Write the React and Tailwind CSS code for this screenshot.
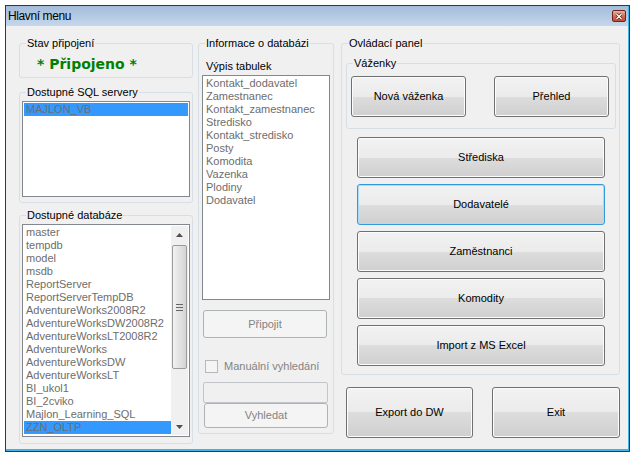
const dbs = [
  "master",
  "tempdb",
  "model",
  "msdb",
  "ReportServer",
  "ReportServerTempDB",
  "AdventureWorks2008R2",
  "AdventureWorksDW2008R2",
  "AdventureWorksLT2008R2",
  "AdventureWorks",
  "AdventureWorksDW",
  "AdventureWorksLT",
  "BI_ukol1",
  "BI_2cviko",
  "Majlon_Learning_SQL",
  "ZZN_OLTP",
];

const tables = [
  "Kontakt_dodavatel",
  "Zamestnanec",
  "Kontakt_zamestnanec",
  "Stredisko",
  "Kontakt_stredisko",
  "Posty",
  "Komodita",
  "Vazenka",
  "Plodiny",
  "Dodavatel",
];

const GroupBox = ({ title, className, children }) => (
  <fieldset className={`rounded-[3px] border border-[#d5dfe5] ${className}`}>
    <legend className="ml-[6px] px-[1px] text-[11px] leading-[13px] text-black">{title}</legend>
    {children}
  </fieldset>
);

const WinButton = ({ children, className, focused }) => (
  <button
    className={`flex items-center justify-center rounded-[3px] border bg-[linear-gradient(to_bottom,#f2f2f2_0%,#ebebeb_50%,#dddddd_50%,#cfcfcf_100%)] text-[11px] text-black ${
      focused
        ? "border-[#3399dd] shadow-[inset_0_0_0_1px_#a8def7]"
        : "border-[#707070] shadow-[inset_0_0_0_1px_#fcfcfc]"
    } ${className}`}
  >
    {children}
  </button>
);

const DisabledButton = ({ children, className }) => (
  <button className={`flex items-center justify-center rounded-[3px] border border-[#adb2b5] bg-[#f4f4f4] text-[11px] text-[#838383] ${className}`}>
    {children}
  </button>
);

const Row = ({ text, selected }) => (
  <div className={`h-[13px] truncate pl-[2px] leading-[13px] text-[#6d6d6d] ${selected ? "bg-[#3399ff]" : ""}`}>
    {text}
  </div>
);

const Arrow = ({ down }) => (
  <svg width="7" height="4" viewBox="0 0 7 4">
    <path d={down ? "M0 0 H7 L3.5 4 Z" : "M0 4 H7 L3.5 0 Z"} fill="#505050" />
  </svg>
);

const ScrollBar = () => (
  <div className="flex w-[17px] flex-col bg-[#f0f0f0]">
    <div className="flex h-[17px] items-center justify-center">
      <Arrow />
    </div>
    <div className="flex-1 px-[1px] pt-[2px]">
      <div className="flex h-[124px] flex-col items-center justify-center gap-[2px] rounded-[2px] border border-[#9b9b9b] bg-[linear-gradient(to_right,#f2f2f2,#e2e2e2_50%,#d4d4d4)]">
        <div className="h-px w-[7px] bg-[#666]" />
        <div className="h-px w-[7px] bg-[#666]" />
        <div className="h-px w-[7px] bg-[#666]" />
      </div>
    </div>
    <div className="flex h-[17px] items-center justify-center">
      <Arrow down />
    </div>
  </div>
);

const CloseButton = () => (
  <div className="flex h-[12px] w-[14px] items-center justify-center rounded-[2px] border border-[#6e2418] bg-[linear-gradient(to_bottom,#eab2a4,#d06a52_55%,#c0503a)]">
    <svg width="8" height="7" viewBox="0 0 8 7">
      <path d="M1.5 1 L6.5 6 M6.5 1 L1.5 6" stroke="#5a1a12" strokeWidth="2.6" />
      <path d="M1.5 1 L6.5 6 M6.5 1 L1.5 6" stroke="#ffffff" strokeWidth="1.4" />
    </svg>
  </div>
);

export default function App() {
  return (
    <div className="h-[468px] w-[644px] bg-white pl-[5px] pt-[5px] font-['Liberation_Sans',Arial,sans-serif] text-[11px] leading-[13px] text-black">
      <div className="h-[447px] w-[625px] border border-[#2b3a48]">
        <div className="flex h-full flex-col border-r border-b-2 border-[#41b4e6]">
          {/* title bar */}
          <div className="flex h-[20px] items-center justify-between bg-[linear-gradient(to_bottom,#a3bcd9,#c5d7ec)] pl-[2px] pr-[2px]">
            <span className="text-[12px] leading-[20px] tracking-[-0.4px] text-black">Hlavní menu</span>
            <CloseButton />
          </div>

          {/* client area */}
          <div className="flex flex-1 bg-[#f0f0f0] pl-[13px] pt-[11px]">
            {/* left column */}
            <div className="flex w-[174px] flex-col">
              <GroupBox title="Stav připojení" className="h-[41px]">
                <div className="mt-[6px] pl-[17px] font-['DejaVu_Sans',sans-serif] text-[14px] font-bold leading-[16px] text-[#008000]">
                  * Připojeno *
                </div>
              </GroupBox>
              <GroupBox title="Dostupné SQL servery" className="mt-[8px] h-[117px]">
                <div className="ml-[2px] mt-[2px] h-[96px] w-[168px] border border-[#828790] bg-white p-[1px]">
                  <Row text="MAJLON_VB" selected />
                </div>
              </GroupBox>
              <GroupBox title="Dostupné databáze" className="mt-[6px] h-[235px]">
                <div className="ml-[2px] mt-[2px] flex h-[213px] w-[168px] border border-[#828790] bg-white p-[1px]">
                  <div className="flex-1 overflow-hidden">
                    {dbs.map((d) => (
                      <Row key={d} text={d} selected={d === "ZZN_OLTP"} />
                    ))}
                  </div>
                  <ScrollBar />
                </div>
              </GroupBox>
            </div>

            {/* middle column */}
            <div className="ml-[5px] w-[136px]">
              <GroupBox title="Informace o databázi" className="h-[397px]">
                <div className="mt-[10px] pl-[7px]">Výpis tabulek</div>
                <div className="ml-[3px] mt-[2px] h-[225px] w-[128px] border border-[#828790] bg-white p-[1px]">
                  {tables.map((t) => (
                    <Row key={t} text={t} />
                  ))}
                </div>
                <DisabledButton className="ml-[4px] mt-[10px] h-[28px] w-[124px]">Připojit</DisabledButton>
                <div className="ml-[6px] mt-[22px] flex items-center gap-[6px]">
                  <div className="h-[13px] w-[13px] border border-[#b8b8b8] bg-[#f4f4f4]" />
                  <span className="text-[#838383]">Manuální vyhledání</span>
                </div>
                <div className="ml-[4px] mt-[9px] h-[21px] w-[125px] rounded-[2px] border border-[#c2c5c9] bg-[#f0f0f0]" />
                <DisabledButton className="ml-[5px] h-[25px] w-[124px]">Vyhledat</DisabledButton>
              </GroupBox>
            </div>

            {/* right column */}
            <div className="ml-[7px] flex w-[279px] flex-col">
              <GroupBox title="Ovládací panel" className="h-[338px]">
                <GroupBox title="Váženky" className="ml-[4px] mt-[7px] h-[72px] w-[270px]">
                  <div className="ml-[4px] mt-[6px] flex gap-[28px]">
                    <WinButton className="h-[41px] w-[115px]">Nová váženka</WinButton>
                    <WinButton className="h-[41px] w-[115px]">Přehled</WinButton>
                  </div>
                </GroupBox>
                <div className="ml-[15px] mt-[8px] flex w-[248px] flex-col gap-[6px]">
                  <WinButton className="h-[41px] w-full">Střediska</WinButton>
                  <WinButton className="h-[41px] w-full" focused>
                    Dodavatelé
                  </WinButton>
                  <WinButton className="h-[41px] w-full">Zaměstnanci</WinButton>
                  <WinButton className="h-[41px] w-full">Komodity</WinButton>
                  <WinButton className="h-[41px] w-full">Import z MS Excel</WinButton>
                </div>
              </GroupBox>
              <div className="ml-[5px] mt-[12px] flex gap-[19px]">
                <WinButton className="h-[51px] w-[127px]">Export do DW</WinButton>
                <WinButton className="h-[51px] w-[128px]">Exit</WinButton>
              </div>
            </div>
          </div>
        </div>
      </div>
    </div>
  );
}
